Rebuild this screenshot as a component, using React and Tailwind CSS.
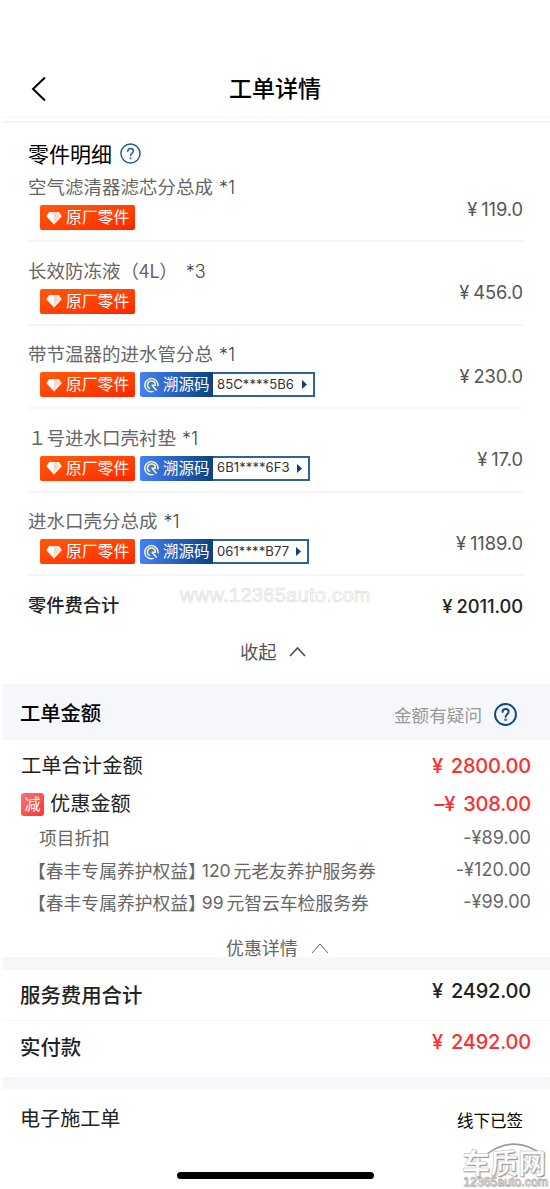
import React from "react";

const CJK = "font-['Noto_Sans_CJK_SC',sans-serif]";
const NUM = "font-['Inter','Noto_Sans_CJK_SC',sans-serif]";

const parts = [
  { name: "空气滤清器滤芯分总成", qty: "*1", price: "119.0" },
  { name: "长效防冻液（4L）", qty: "*3", wide: true, price: "456.0" },
  { name: "带节温器的进水管分总", qty: "*1", price: "230.0", code: "85C****5B6", width: "w-[102px]" },
  { name: "１号进水口壳衬垫", qty: "*1", price: "17.0", code: "6B1****6F3", width: "w-[97px]" },
  { name: "进水口壳分总成", qty: "*1", price: "1189.0", code: "061****B77", width: "w-[96px]" },
];

const discounts = [
  { label: "项目折扣", price: "-¥89.00" },
  { num: "120", label: "元老友养护服务券", price: "-¥120.00", tag: true },
  { num: "99", label: "元智云车检服务券", price: "-¥99.00", tag: true },
];

function Help({ size, stroke, color }) {
  return (
    <svg width={size} height={size} viewBox="0 0 24 24" fill="none" stroke={color} strokeWidth={stroke} strokeLinecap="round" className="shrink-0">
      <circle cx="12" cy="12" r="10.9" />
      <path d="M8.9 9.5c0-2 1.4-3.2 3.2-3.2s3.2 1.2 3.2 2.9c0 2.3-3.2 2.6-3.2 5.1" />
      <circle cx="12.1" cy="17.5" r=".4" fill={color} />
    </svg>
  );
}

function Genuine() {
  return (
    <div className="flex h-[25px] w-[95px] items-center rounded-[2px] bg-linear-to-br from-[#ff5a0a] to-[#ff2300] pl-[6px] text-[15.8px] leading-none text-white">
      <svg width="16" height="14" viewBox="0 0 16 14" className="mr-[4px] shrink-0">
        <path d="M3.2 1h9.6L15.6 5.2 8 13.4.4 5.2z" fill="#fff" />
        <path d="M8 1h3L12 5.2 8 13.4z" fill="#ffd5ca" />
        <path d="M12.8 1l2.8 4.2L8 13.4l4-8.2L11 1z" fill="#ffece6" />
      </svg>
      <span className="pb-px whitespace-nowrap">原厂零件</span>
    </div>
  );
}

function TraceCode({ code, width }) {
  return (
    <div className="ml-[5px] flex h-[25px]">
      <div className="flex w-[73px] items-center rounded-l-[2px] bg-linear-to-r from-[#4481fa] to-[#0d427f] pl-[4px] text-[15.5px] leading-none text-white">
        <svg width="15" height="16" viewBox="0 0 15 16" fill="none" stroke="#fbf3ae" strokeWidth="1.5" className="mr-[4px] shrink-0">
          <path d="M9.6 14.4A6.6 6.6 0 1 1 13.9 9.3" />
          <path d="M6.3 11.6A3.9 3.9 0 1 1 11.3 8.2H7.6" />
          <path d="M8 8.2 12.6 13.6" />
        </svg>
        <span className="pb-px whitespace-nowrap">溯源码</span>
      </div>
      <div className={`flex ${width} items-center justify-between border-y-2 border-r-2 border-[#2f629b] bg-white pr-[6px] pl-[4px] ${NUM} text-[13.1px] leading-none text-[#333]`}>
        <span className="tracking-[0.05px] whitespace-nowrap">{code}</span>
        <svg width="5" height="9" viewBox="0 0 5 9"><path d="M0 0l5 4.5L0 9z" fill="#0d427f" /></svg>
      </div>
    </div>
  );
}

function Part({ part, first }) {
  return (
    <div className={`flex justify-between border-b-2 border-[#f5f5f6] ${first ? "h-[72px] pt-[7px]" : "h-[83.5px] pt-[18.5px]"}`}>
      <div>
        <div className="flex h-[28px] text-[18.5px] leading-[19px] text-[#666]">
          <span>{part.name}</span>
          <span className={`${part.wide ? "ml-[8px]" : "ml-[6px]"} pt-px ${NUM} text-[18px] font-light text-[#444]`}>{part.qty}</span>
        </div>
        <div className="flex pl-[12px]">
          <Genuine />
          {part.code && <TraceCode code={part.code} width={part.width} />}
        </div>
      </div>
      <div className={`flex h-[56px] items-center gap-[4px] self-start ${first ? "pt-[9px]" : "pt-[8px]"} ${NUM} text-[18.3px] leading-none tracking-[-0.05px] text-[#555]`}>
        <span>¥</span><span>{part.price}</span>
      </div>
    </div>
  );
}

function Amount({ sign, value, color }) {
  return (
    <div className={`flex items-center gap-[8px] ${NUM} text-[20px] leading-none font-[450] tracking-[-0.2px] ${color}`}>
      <span>{sign}</span><span>{value}</span>
    </div>
  );
}

export default function App() {
  return (
    <div className={`relative h-[1189px] w-[550px] overflow-hidden bg-white pl-[2px] ${CJK} text-[#222]`}>
      <header className="flex h-[117px] items-center pt-[60px] pl-[29px] text-black">
        <svg width="16" height="26" viewBox="0 0 16 26" fill="none" stroke="#000" strokeWidth="2"><path d="M14 1.5 2 13l12 11.5" /></svg>
        <h1 className="ml-[182px] pb-[3px] text-[23px] leading-none font-medium">工单详情</h1>
      </header>
      <div className="h-[6px] border-t border-b-2 border-[#f5f5f6]" />

      <section className="pr-[27px] pl-[26px]">
        <div className="flex h-[47px] items-center gap-[8px] pt-[14px] text-[21px] leading-none text-black">
          <span className="pb-px">零件明细</span>
          <Help size={21} stroke={1.7} color="#265c99" />
        </div>
        {parts.map((p, i) => <Part key={p.name} part={p} first={i === 0} />)}
        <div className="flex h-[56px] items-center justify-between pt-[2px] text-[18.3px] leading-none font-medium">
          <span className="pb-[2px]">零件费合计</span>
          <span className={`flex gap-[4px] pt-[2px] ${NUM} text-[18.3px] tracking-[-0.05px]`}><span>¥</span><span>2011.00</span></span>
        </div>
        <div className="flex h-[52px] items-start gap-[12px] pt-[9px] pl-[212px] text-[18.3px] leading-[20px] text-[#555]">
          <span>收起</span>
          <svg width="17" height="20" viewBox="0 0 17 20" fill="none" stroke="#555" strokeWidth="1.8"><path d="M1 15 8.5 7l7.5 8" /></svg>
        </div>
      </section>

      <section>
        <div className="flex h-[56px] items-center justify-between bg-[#f6f7fa] pr-[33px] pl-[18px]">
          <h2 className="text-[20.3px] leading-none font-medium text-black">工单金额</h2>
          <div className="flex items-center gap-[12px] pt-[5px] text-[17.6px] leading-none text-[#999]">
            <span>金额有疑问</span>
            <Help size={23} stroke={2} color="#0b4784" />
          </div>
        </div>
        <div className="flex h-[50px] items-center justify-between pr-[19px] pl-[19px] text-[20.3px] leading-none">
          <span className="pb-[2px]">工单合计金额</span>
          <div className="pt-px"><Amount sign="¥" value="2800.00" color="text-[#fa3032]" /></div>
        </div>
        <div className="flex h-[28px] items-center justify-between pr-[19px] pl-[19px] text-[20.2px] leading-none">
          <div className="flex items-center gap-[6px]">
            <span className="flex size-[23px] items-center justify-center rounded-[3px] bg-linear-to-br from-[#ff7072] to-[#f92f33] pb-[2px] text-[16px] text-white">减</span>
            <span className="pb-[2px]">优惠金额</span>
          </div>
          <Amount sign="–¥" value="308.00" color="text-[#fa3032]" />
        </div>
        <div className="pt-[4px] pr-[19px] text-[17.8px] leading-none text-[#666]">
          {discounts.map((d) => (
            <div key={d.label} className="flex h-[32px] items-center justify-between">
              {d.tag ? (
                <div className="flex items-center pt-px pl-[26px] whitespace-nowrap">
                  <span>【春丰专属养护权益】</span>
                  <span className={`-ml-[4px] ${NUM} text-[17.6px] tracking-[-0.1px]`}>{d.num}</span>
                  <span className="ml-[3px]">{d.label}</span>
                </div>
              ) : (
                <span className="pl-[37px] text-[17.7px]">{d.label}</span>
              )}
              <span className={`${NUM} text-[18px] tracking-[0.05px]`}>{d.price}</span>
            </div>
          ))}
        </div>
        <div className="flex h-[39px] items-center gap-[13px] pt-[20px] pl-[224px] text-[17.9px] leading-none text-[#666]">
          <span>优惠详情</span>
          <svg width="18" height="12" viewBox="0 0 18 12" fill="none" stroke="#666" strokeWidth="1"><path d="M1 11 9 2l8 9" /></svg>
        </div>
      </section>

      <div className="h-[13px] bg-[#f6f7fa]" />
      <section className="text-[20.4px] leading-none font-medium">
        <div className="flex h-[51px] items-center justify-between border-b border-[#f4f4f5] pr-[19px] pl-[18px]">
          <span className="pb-[2px]">服务费用合计</span>
          <div className="pb-[9px]"><Amount sign="¥" value="2492.00" color="text-[#222]" /></div>
        </div>
        <div className="flex h-[56px] items-center justify-between pr-[19px] pl-[18px]">
          <span className="pb-[6px]">实付款</span>
          <div className="pb-[15px]"><Amount sign="¥" value="2492.00" color="text-[#fa3032]" /></div>
        </div>
      </section>
      <div className="h-[12px] bg-[#f6f7fa]" />
      <div className="flex h-[60px] items-center justify-between pr-[27px] pl-[18px] text-[20.1px] leading-none">
        <span className="pb-[2px]">电子施工单</span>
        <span className="pt-[2px] text-[16.5px] text-black">线下已签</span>
      </div>
      <div className="mt-[23px] ml-[175px] h-[7px] w-[197px] rounded-full bg-black" />

      <div className="absolute top-[585px] left-[180px] font-['Liberation_Sans',sans-serif] text-[20px] leading-[20px] tracking-[0.3px] whitespace-nowrap text-white [-webkit-text-stroke:0.7px_#dcdcdc]">www.12365auto.com</div>

      <div className="absolute top-[1141px] left-[461px] flex h-[48px] w-[88px] flex-col pt-[8px] pl-[1px]">
        <svg width="88" height="48" viewBox="0 0 88 48" fill="none" className="absolute top-0 left-0">
          <path d="M27 13Q54-7 84 16" stroke="#999" strokeWidth="2.6" />
          <path d="M27 14.2Q54-5.8 84 17.2" stroke="#fff" strokeWidth="1.8" />
        </svg>
        <div className="relative h-[27px] text-[28px] leading-[27px] font-bold whitespace-nowrap text-white [-webkit-text-stroke:0.5px_#bbb] [text-shadow:1px_1px_1px_#888]">车质网</div>
        <div className="pl-px font-['Liberation_Sans',sans-serif] text-[12.3px] leading-[12px] whitespace-nowrap text-white [-webkit-text-stroke:0.5px_#999] [text-shadow:1px_1px_1px_#bbb]">12365auto.com</div>
      </div>
    </div>
  );
}
